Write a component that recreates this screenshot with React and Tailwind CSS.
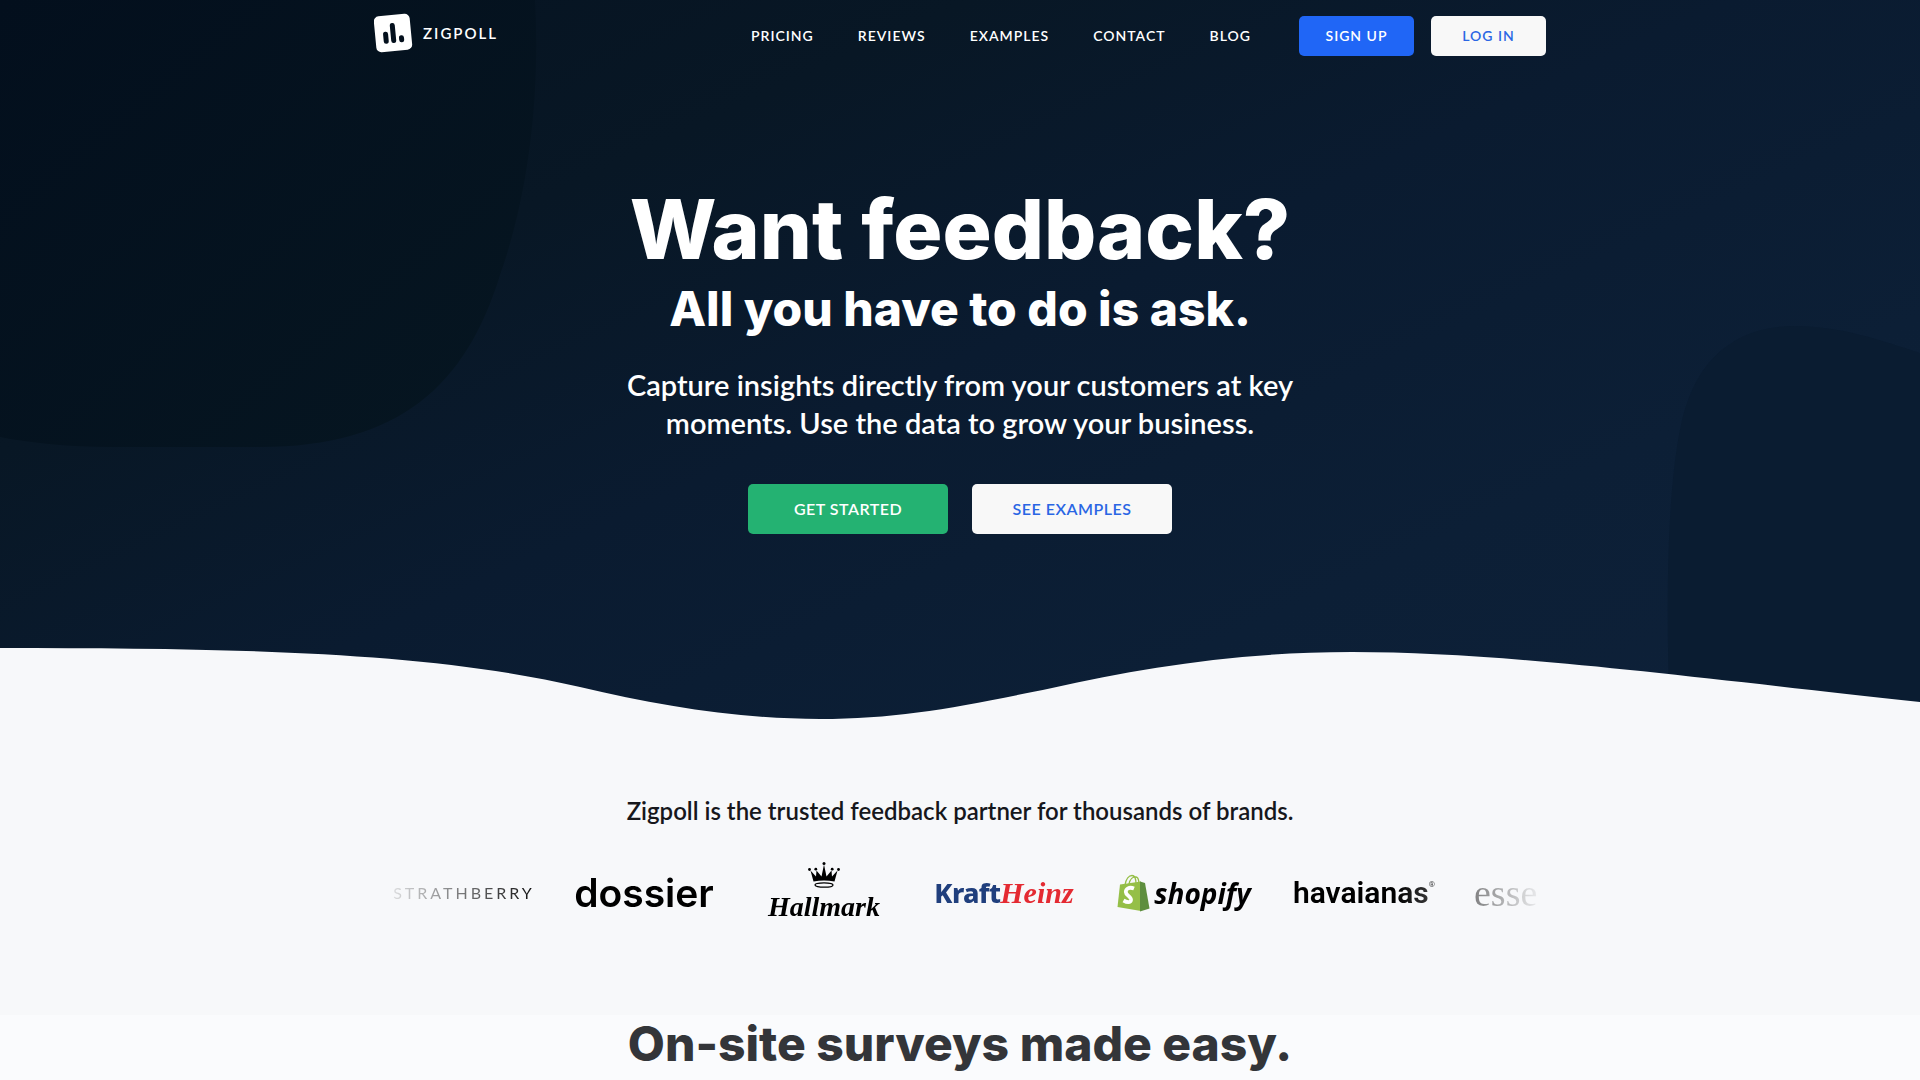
const navLinks = ["Pricing", "Reviews", "Examples", "Contact", "Blog"];

function LogoMark() {
  return (
    <svg viewBox="1 0 40 40" className="size-10" aria-hidden="true">
      <g transform="rotate(-5.5 20 20)">
        <rect x="2" y="2" width="36" height="36" rx="5" fill="#fff" />
        <g stroke="#04101d" strokeWidth="5" strokeLinecap="round">
          <path d="M12.500 20.500v7" />
          <path d="M20 12.500v15" />
          <path d="M28 25.500v2" />
        </g>
      </g>
    </svg>
  );
}

function Header() {
  return (
    <header className="mx-auto flex w-full max-w-[1172px] items-start justify-between">
      <a href="#home" className="mt-[13px] flex items-center gap-[9px] text-[15px] tracking-[2px] text-white">
        <LogoMark />
        ZIGPOLL
      </a>
      <div className="mt-4 flex items-center">
        <nav className="mr-12 flex gap-11 text-sm uppercase tracking-[1px] text-white">
          {navLinks.map((label) => (
            <a key={label} href={"#" + label.toLowerCase()}>
              {label}
            </a>
          ))}
        </nav>
        <div className="flex gap-[17px] text-sm tracking-[1px]">
          <a href="#signup" className="flex h-10 w-[115px] items-center justify-center rounded-[5px] bg-[#2066f6] text-white">
            SIGN UP
          </a>
          <a href="#login" className="flex h-10 w-[115px] items-center justify-center rounded-[5px] bg-[#f8f8f8] text-[#2a66e4]">
            LOG IN
          </a>
        </div>
      </div>
    </header>
  );
}

function HeroBackdrop() {
  return (
    <svg
      viewBox="0 0 1920 720"
      preserveAspectRatio="none"
      className="absolute inset-0 h-full w-full"
      aria-hidden="true"
    >
      <defs>
        <linearGradient id="leftBlob" x1="0" y1="0" x2="1" y2="1">
          <stop offset="0" stopColor="#030f1d" />
          <stop offset="1" stopColor="#061621" />
        </linearGradient>
      </defs>
      <path d="M0 0H535C540 90 530 190 500 275C466 385 400 447 260 447H110C70 447 30 443 0 437Z" fill="url(#leftBlob)" />
      <path d="M1670 720C1666 620 1666 500 1680 430C1692 365 1730 326 1795 326C1840 326 1880 340 1920 353V720Z" fill="#0a1c31" />
      <path
        d="M0 648C240 648 430 652 580 687C660 706 740 719 820 719C900 719 960 707 1052 688C1140 668 1240 652 1352 652C1500 652 1664 674 1920 702V720H0Z"
        fill="#f7f8fa"
      />
    </svg>
  );
}

function Hero() {
  return (
    <section className="relative bg-[linear-gradient(155deg,#051220_0%,#081725_28%,#0a1b30_50%,#0c1f36_75%,#0e2139_100%)] pb-[186px]">
      <HeroBackdrop />
      <div className="relative">
        <Header />
        <div className="flex flex-col items-center pt-[126px] text-center text-white">
          <h1 className="font-['Inter',sans-serif] text-[82px] leading-[96px] font-extrabold">Want feedback?</h1>
          <h2 className="font-['Inter',sans-serif] text-5xl leading-[62px] font-extrabold">All you have to do is ask.</h2>
          <p className="mt-[26px] text-[29px] leading-[38px]">
            Capture insights directly from your customers at key
            <br />
            moments. Use the data to grow your business.
          </p>
          <div className="mt-[42px] flex gap-6 text-base tracking-[0.5px]">
            <a href="#start" className="flex h-[50px] w-[200px] items-center justify-center rounded-[5px] bg-[#24b272]">
              GET STARTED
            </a>
            <a href="#examples" className="flex h-[50px] w-[200px] items-center justify-center rounded-[5px] bg-[#f8f8f8] text-[#2a66e4]">
              SEE EXAMPLES
            </a>
          </div>
        </div>
      </div>
    </section>
  );
}

function Crown() {
  return (
    <svg viewBox="0 0 32 27" className="h-[27px] w-8" aria-hidden="true">
      <path d="M5.500 19.500L2.500 8.500L8 14.500L8.500 8.500L13.500 14.500L16 2.500L18.500 14.500L23.500 8.500L24 14.500L29.500 8.500L26.500 19.500Q16 17.500 5.500 19.500Z" />
      <ellipse cx="16" cy="23" rx="9" ry="2.200" fill="none" stroke="#000" strokeWidth="1.300" />
      <circle cx="1.500" cy="7.500" r="1.400" />
      <circle cx="7.800" cy="7.200" r="1.400" />
      <circle cx="16" cy="1.600" r="1.500" />
      <circle cx="24.200" cy="7.200" r="1.400" />
      <circle cx="30.500" cy="7.500" r="1.400" />
    </svg>
  );
}

function ShoppingBag() {
  return (
    <svg viewBox="0 0 33 38" className="h-[38px] w-[33px]" aria-hidden="true">
      <path d="M8 11C9 5 12 1.500 15 1.500S19 6 19 10M12 10C13 5 16 2.500 19 3S21.500 7 22 9" fill="none" stroke="#95bf47" strokeWidth="1.300" />
      <path d="M3 10.500L24 7.500V37L0.500 33Z" fill="#95bf47" />
      <path d="M23 7.500L28 9L32.500 34.500L23 37.500Z" fill="#5e8e3e" />
      <path d="M17 14.500C12 12.500 8.800 15 8.800 18C8.800 21.500 14.500 22.500 14 26C13.500 29 10 28.500 6.500 26.500" fill="none" stroke="#fff" strokeWidth="3.800" />
    </svg>
  );
}

function Brand({ children }) {
  return <li className="flex h-[76px] w-[180px] shrink-0 items-center justify-center text-black">{children}</li>;
}

function Brands() {
  return (
    <section className="pt-[72px] pb-[84px]">
      <h2 className="text-center text-2xl leading-[38px] text-[#16171c]">
        Zigpoll is the trusted feedback partner for thousands of brands.
      </h2>
      <ul className="mx-auto mt-[25px] flex max-w-[1172px] overflow-hidden whitespace-nowrap [mask-image:linear-gradient(90deg,transparent,black_170px,black_calc(100%-150px),transparent)]">
        <Brand>
          <span className="font-['Lato',sans-serif] text-base font-normal tracking-[3px]">STRATHBERRY</span>
        </Brand>
        <Brand>
          <span className="font-['Inter',sans-serif] text-[39px] leading-10 font-semibold">dossier</span>
        </Brand>
        <Brand>
          <span className="flex flex-col items-center">
            <Crown />
            <span className="font-['Liberation_Serif',serif] text-[28px] leading-9 font-bold italic">Hallmark</span>
          </span>
        </Brand>
        <Brand>
          <span className="text-[27px] leading-8 font-extrabold text-[#203f7d]">
            <span className="font-['Noto_Sans',sans-serif] tracking-tight">Kraft</span>
            <span className="font-['Liberation_Serif',serif] text-[30px] italic text-[#e42a32]">Heinz</span>
          </span>
        </Brand>
        <Brand>
          <span className="flex items-center gap-1">
            <ShoppingBag />
            <span className="font-['Open_Sans',sans-serif] text-[28px] leading-8 font-bold italic">shopify</span>
          </span>
        </Brand>
        <Brand>
          <span className="flex items-start font-['Roboto',sans-serif] text-[30px] leading-8 font-semibold">
            havaianas<span className="text-[8px] leading-4 font-normal">®</span>
          </span>
        </Brand>
        <Brand>
          <span className="w-[140px] font-['Liberation_Serif',serif] text-[38px] leading-8 font-normal">esse</span>
        </Brand>
      </ul>
    </section>
  );
}

export default function App() {
  return (
    <div className="min-h-screen overflow-x-hidden bg-[#f7f8fa] font-['Lato_Semibold','Lato',sans-serif] font-semibold">
      <Hero />
      <main>
        <Brands />
        <section className="bg-[#fafbfd] pb-2">
          <h2 className="text-center font-['Inter',sans-serif] text-5xl leading-[57px] font-extrabold text-[#333539]">
            On-site surveys made easy.
          </h2>
        </section>
      </main>
    </div>
  );
}
